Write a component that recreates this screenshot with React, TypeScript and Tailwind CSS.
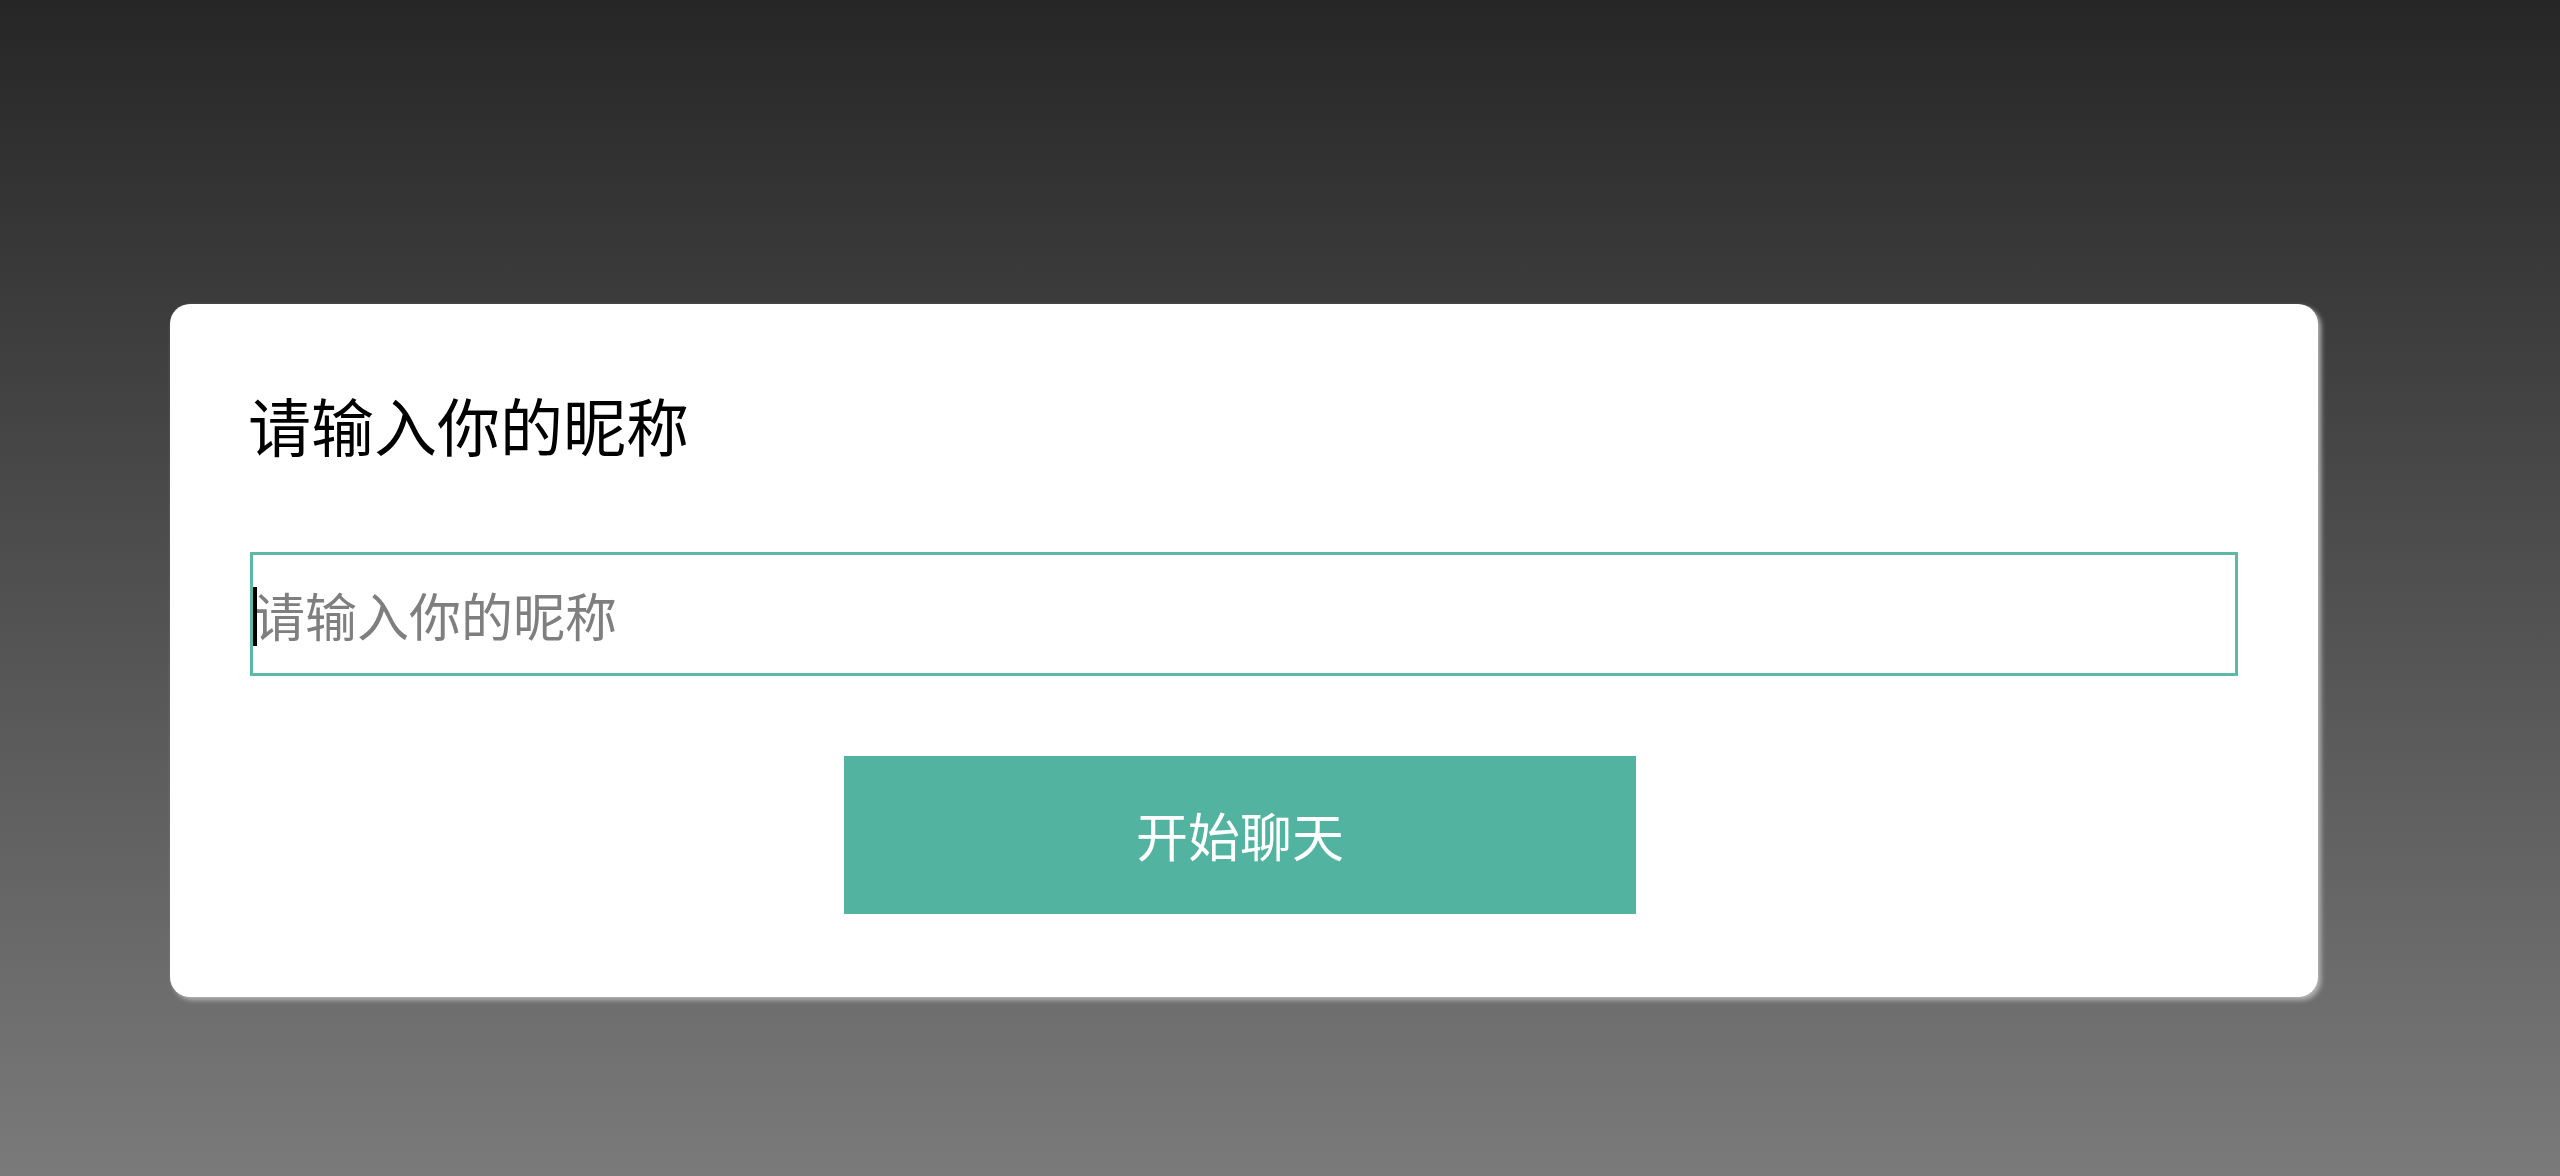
import React from "react";

export default function App() {
  return (
    <div
      className="w-full h-[1176px] overflow-hidden bg-[linear-gradient(to_bottom,#262626,#7a7a7a)] pt-[304px] pl-[170px]"
      style={{ fontFamily: '"Noto Sans CJK SC", "Noto Sans", sans-serif' }}
    >
      <div className="w-[2148px] h-[693px] bg-white rounded-[20px] shadow-[3px_3px_5px_#b5b5b5] px-[80px] pt-[72px] flex flex-col">
        <div className="h-[96px] leading-[96px] text-[63px] text-black whitespace-nowrap -ml-[2px]">
          请输入你的昵称
        </div>
        <div className="relative mt-[80px] h-[124px]">
          <input
            type="text"
            placeholder="请输入你的昵称"
            className="w-full h-full border-[3px] border-[#5bb9a6] outline-none bg-white px-0 text-[52px] text-black placeholder:text-[#7f7f7f]"
            style={{ fontFamily: '"Noto Sans CJK SC", "Noto Sans", sans-serif' }}
          />
          <span className="absolute left-[3px] top-[35px] w-[4px] h-[59px] bg-black pointer-events-none" />
        </div>
        <div className="mt-[80px] flex justify-center pr-[8px]">
          <button className="w-[792px] h-[158px] bg-[#52b3a1] text-white text-[52px] leading-none">
            开始聊天
          </button>
        </div>
      </div>
    </div>
  );
}
